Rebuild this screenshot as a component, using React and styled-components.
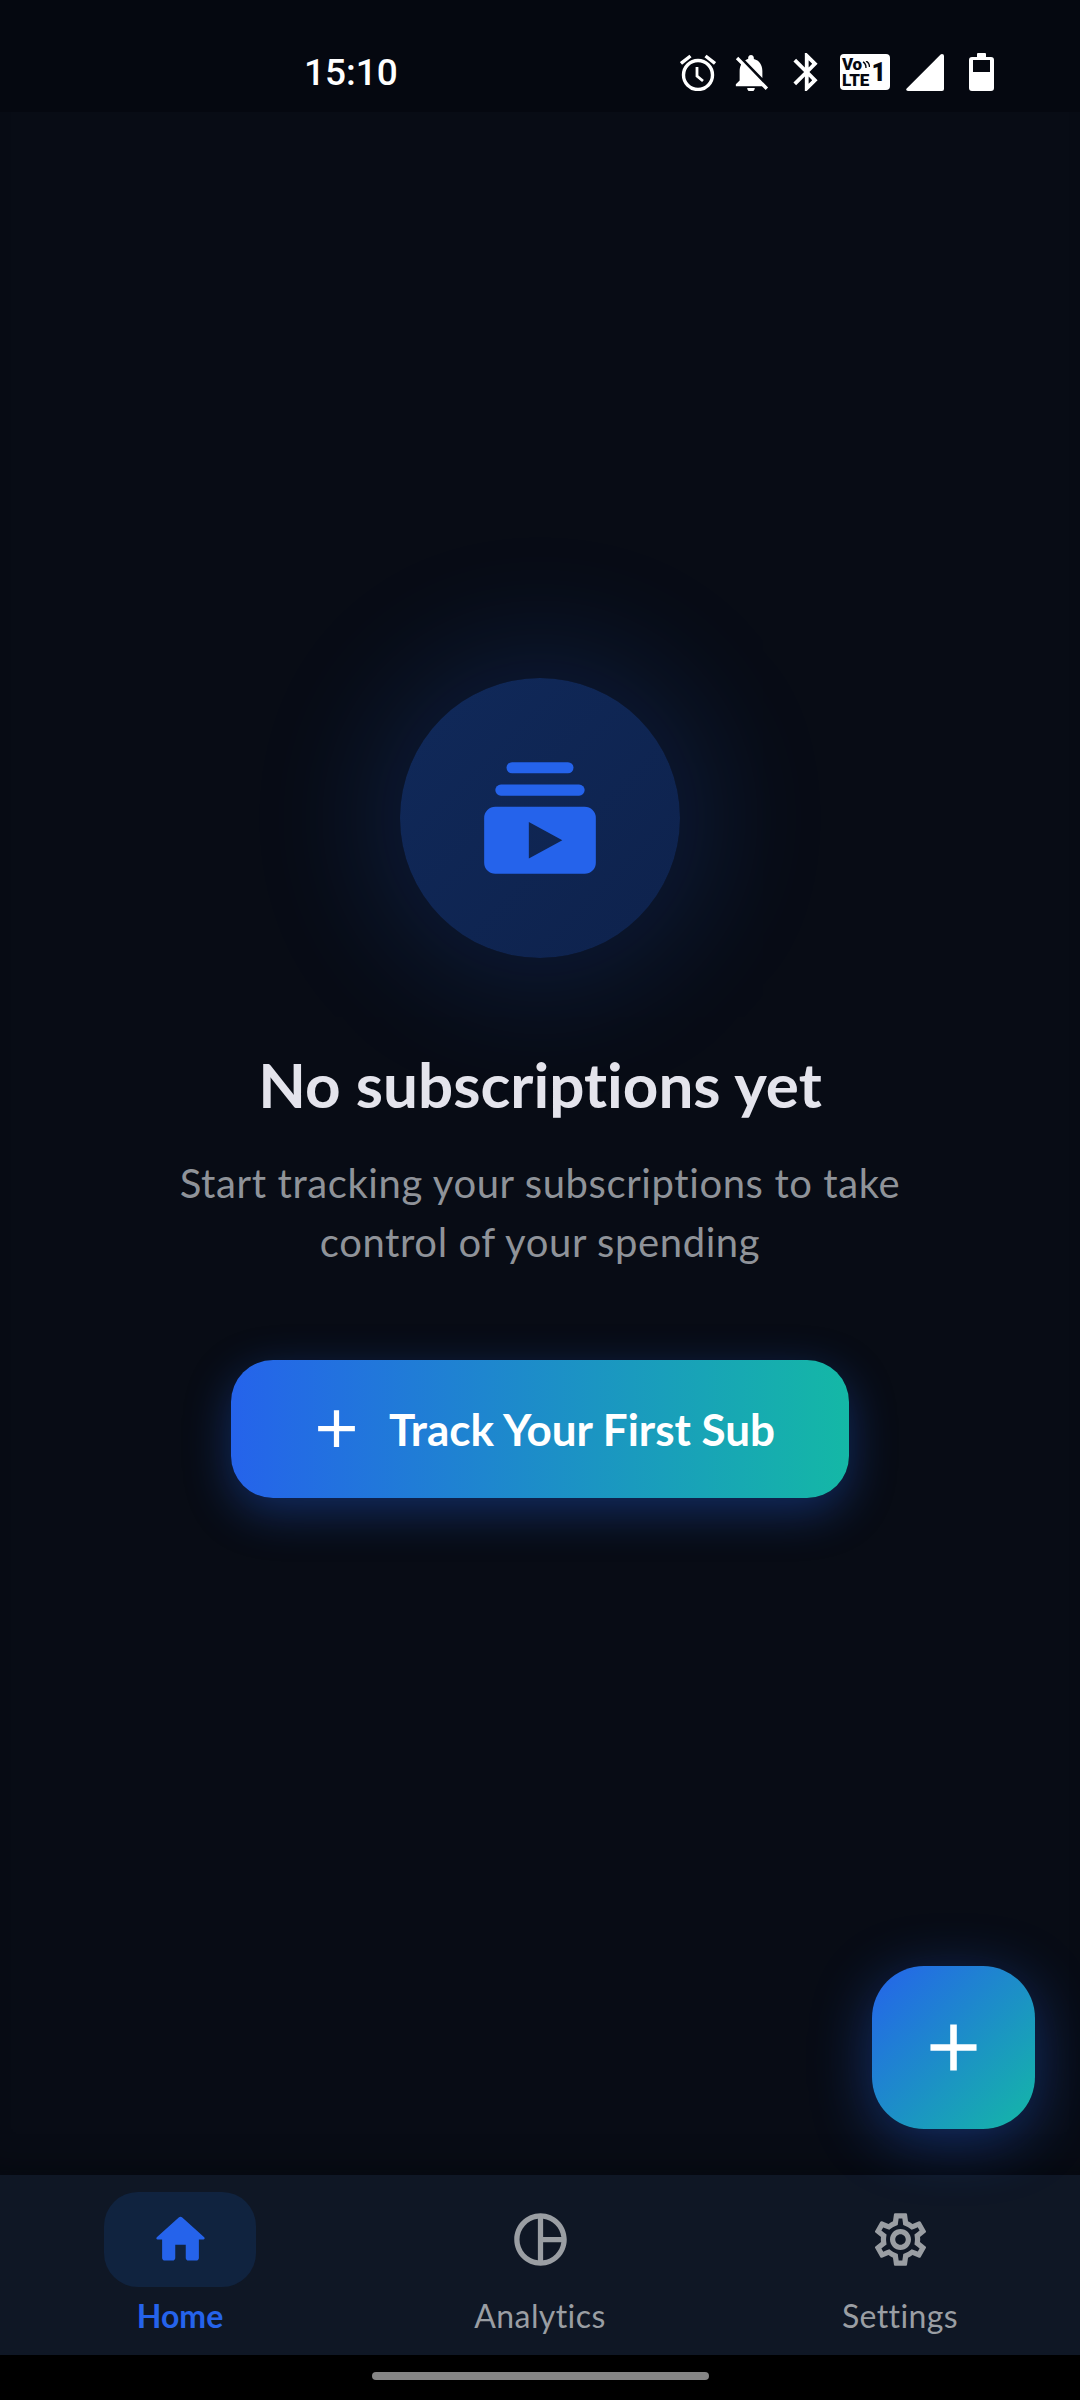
import React from "react";
import styled, { createGlobalStyle } from "styled-components";

const GlobalStyle = createGlobalStyle`
  * {
    box-sizing: border-box;
  }
  html,
  body {
    margin: 0;
    padding: 0;
    background: #080c15;
    font-family: "Lato", "Noto Sans", sans-serif;
    font-variant-ligatures: none;
  }
`;

const Screen = styled.div`
  position: relative;
  width: 1080px;
  height: 2400px;
  display: flex;
  flex-direction: column;
  overflow: hidden;
  background: #080c15;
`;

const StatusBar = styled.header`
  height: 112px;
  flex: none;
  display: flex;
  align-items: center;
  padding: 32px 86px 0 304px;
  background: #050810;
  color: #fff;
`;

const Clock = styled.span`
  font-family: "Roboto", sans-serif;
  font-size: 37px;
  font-weight: 500;
`;

const StatusIcons = styled.div`
  margin-left: auto;
  display: flex;
  align-items: center;
`;

const StatusSlot = styled.span`
  display: flex;
  margin-left: ${(props) => props.$gap || 0}px;
`;

const VolteBadge = styled.span`
  width: 50px;
  height: 36px;
  border-radius: 4px;
  background: #fff;
  color: #050810;
  display: flex;
  align-items: center;
  padding: 0 2px;
  font-family: "Roboto", sans-serif;
  font-weight: 900;
`;

const VolteStack = styled.span`
  display: flex;
  flex-direction: column;
  font-size: 17px;
  line-height: 16px;
  letter-spacing: -0.3px;
`;

const VolteSim = styled.span`
  margin-left: auto;
  margin-right: 2px;
  font-size: 25px;
  line-height: 25px;
`;

const Main = styled.main`
  flex: 1;
  display: flex;
  flex-direction: column;
  align-items: center;
  justify-content: center;
  padding-bottom: 112px;
  box-shadow: inset 0 -30px 30px -20px rgba(0, 0, 0, 0.25);
`;

const HeroCircle = styled.div`
  width: 280px;
  height: 280px;
  flex: none;
  border-radius: 50%;
  display: flex;
  align-items: center;
  justify-content: center;
  background: linear-gradient(135deg, #10295a, #0e224c);
  box-shadow: 0 0 130px 24px rgba(37, 99, 235, 0.19);
`;

const Title = styled.h1`
  margin: 90px 0 0;
  font-size: 62px;
  line-height: 72px;
  font-weight: 700;
  color: #e4e4ec;
`;

const Subtitle = styled.p`
  margin: 34px 0 0;
  width: 780px;
  text-align: center;
  font-size: 40px;
  line-height: 59px;
  letter-spacing: 0.6px;
  font-weight: 400;
  color: #8f9399;
`;

const TrackButton = styled.button`
  margin-top: 88px;
  width: 618px;
  height: 138px;
  flex: none;
  border: 0;
  border-radius: 42px;
  display: flex;
  align-items: center;
  justify-content: center;
  gap: 21px;
  background: linear-gradient(90deg, #2563eb, #14b8a6);
  box-shadow: 0 14px 46px rgba(37, 99, 235, 0.36);
  color: #fff;
  font-family: inherit;
  font-variant-ligatures: none;
  font-size: 44px;
  font-weight: 700;
`;

const Fab = styled.button`
  position: absolute;
  right: 45px;
  bottom: 271px;
  width: 163px;
  height: 163px;
  border: 0;
  padding: 0;
  border-radius: 52px;
  display: flex;
  align-items: center;
  justify-content: center;
  background: linear-gradient(135deg, #2563eb, #14b8a6);
  box-shadow: 0 12px 60px rgba(37, 99, 235, 0.4);
  color: #fff;
`;

const BottomNav = styled.nav`
  position: relative;
  height: 180px;
  flex: none;
  display: grid;
  grid-template-columns: repeat(3, 1fr);
  background: rgba(16, 24, 38, 0.97);
`;

const NavItem = styled.a`
  display: flex;
  flex-direction: column;
  align-items: center;
  padding-top: 17px;
  color: ${(props) => (props.$active ? "#2563eb" : "#9a9ea3")};
  font-size: 32px;
  letter-spacing: ${(props) => (props.$active ? 0 : 0.4)}px;
  font-weight: ${(props) => (props.$active ? 700 : 400)};
`;

const NavPill = styled.span`
  width: 152px;
  height: 95px;
  border-radius: 34px;
  display: flex;
  align-items: center;
  justify-content: center;
  background: ${(props) => (props.$active ? "#10233f" : "transparent")};
`;

const NavLabel = styled.span`
  margin-top: 9px;
  line-height: 40px;
`;

const GestureBar = styled.div`
  height: 45px;
  flex: none;
  background: #000;
  display: flex;
  justify-content: center;
  padding-top: 17px;
`;

const GestureHandle = styled.span`
  width: 337px;
  height: 8px;
  border-radius: 4px;
  background: #858585;
`;

const Icon = ({ size = 63, path, color = "currentColor", fillRule }) => (
  <svg width={size} height={size} viewBox="0 0 24 24" fill={color}>
    <path d={path} fillRule={fillRule} />
  </svg>
);

const ADD =
  "M19 13h-6v6h-2v-6H5v-2h6V5h2v6h6v2z";
const HOME =
  "M10 19v-5h4v5c0 .55.45 1 1 1h3c.55 0 1-.45 1-1v-7h1.7c.46 0 .68-.57.33-.87L12.67 3.6c-.38-.34-.96-.34-1.34 0l-8.36 7.53c-.34.3-.13.87.33.87H5v7c0 .55.45 1 1 1h3c.55 0 1-.45 1-1z";
const PIE =
  "M12 2C6.48 2 2 6.48 2 12s4.48 10 10 10 10-4.48 10-10S17.52 2 12 2zm1 2.07c3.61.45 6.48 3.33 6.93 6.93H13V4.07zM4 12c0-4.06 3.07-7.44 7-7.93v15.87c-3.93-.5-7-3.88-7-7.94zm9 7.93V13h6.93c-.45 3.61-3.32 6.48-6.93 6.93z";
const GEAR =
  "M19.43 12.98c.04-.32.07-.64.07-.98 0-.34-.03-.66-.07-.98l2.11-1.65c.19-.15.24-.42.12-.64l-2-3.46c-.09-.16-.26-.25-.44-.25-.06 0-.12.01-.17.03l-2.49 1c-.52-.4-1.08-.73-1.69-.98l-.38-2.65C14.46 2.18 14.25 2 14 2h-4c-.25 0-.46.18-.49.42l-.38 2.65c-.61.25-1.17.59-1.69.98l-2.49-1c-.06-.02-.12-.03-.18-.03-.17 0-.34.09-.43.25l-2 3.46c-.13.22-.07.49.12.64l2.11 1.65c-.04.32-.07.65-.07.98 0 .33.03.66.07.98l-2.11 1.65c-.19.15-.24.42-.12.64l2 3.46c.09.16.26.25.44.25.06 0 .12-.01.17-.03l2.49-1c.52.4 1.08.73 1.69.98l.38 2.65c.03.24.24.42.49.42h4c.25 0 .46-.18.49-.42l.38-2.65c.61-.25 1.17-.59 1.69-.98l2.49 1c.06.02.12.03.18.03.17 0 .34-.09.43-.25l2-3.46c.12-.22.07-.49-.12-.64l-2.11-1.65zm-1.98-1.71c.04.31.05.52.05.73 0 .21-.02.43-.05.73l-.14 1.13.89.7 1.08.84-.7 1.21-1.27-.51-1.04-.42-.9.68c-.43.32-.84.56-1.25.73l-1.06.43-.16 1.13-.2 1.35h-1.4l-.19-1.35-.16-1.13-1.06-.43c-.43-.18-.83-.41-1.23-.71l-.91-.7-1.06.43-1.27.51-.7-1.21 1.08-.84.89-.7-.14-1.13c-.03-.31-.05-.54-.05-.74s.02-.43.05-.73l.14-1.13-.89-.7-1.08-.84.7-1.21 1.27.51 1.04.42.9-.68c.43-.32.84-.56 1.25-.73l1.06-.43.16-1.13.2-1.35h1.39l.19 1.35.16 1.13 1.06.43c.43.18.83.41 1.23.71l.91.7 1.06-.43 1.27-.51.7 1.21-1.07.85-.89.7.14 1.13zM12 8c-2.21 0-4 1.79-4 4s1.79 4 4 4 4-1.79 4-4-1.79-4-4-4zm0 6c-1.1 0-2-.9-2-2s.9-2 2-2 2 .9 2 2-.9 2-2 2z";

// stacked cards with a play button, the empty state mark
const SubscriptionsIcon = () => (
  <svg width="134" height="134" viewBox="0 0 24 24">
    <rect x="6" y="2" width="12" height="2" rx="1" fill="#2563eb" />
    <rect x="4" y="6" width="16" height="2" rx="1" fill="#2563eb" />
    <path
      fill="#2563eb"
      fillRule="evenodd"
      d="M4 10h16a2 2 0 0 1 2 2v8a2 2 0 0 1-2 2H4a2 2 0 0 1-2-2v-8a2 2 0 0 1 2-2zm6 2.73v6.53L16 16z"
    />
  </svg>
);

const AlarmIcon = () => (
  <svg width="36" height="38" viewBox="0 0 36 38" fill="none" stroke="#fff">
    <circle cx="18" cy="22" r="14.5" strokeWidth="3.4" />
    <path d="M17 14v9l6 5" strokeWidth="2.8" />
    <path d="M1 10.5 10.5 3M35 10.5 25.5 3" strokeWidth="3.4" />
  </svg>
);

const BellOffIcon = () => (
  <svg width="36" height="38" viewBox="2.5 1.5 19 20" fill="#fff">
    <path d="M20 18.69L7.84 6.14 5.27 3.49 4 4.76l2.8 2.8v.01c-.52.99-.8 2.16-.8 3.42v5l-2 2v1h13.73l2 2L21 19.72l-1-1.03zM12 22c1.11 0 2-.89 2-2h-4c0 1.11.89 2 2 2zm6-7.32V11c0-3.08-1.64-5.64-4.5-6.32V4c0-.83-.67-1.5-1.5-1.5s-1.5.67-1.5 1.5v.68c-.15.03-.29.08-.42.12-.1.03-.2.07-.3.11h-.01c-.2.08-.4.17-.59.27-.1.05-.2.1-.29.16L18 14.68z" />
  </svg>
);

const BluetoothIcon = () => (
  <svg width="25" height="38" viewBox="5 2 12.7 20" fill="#fff">
    <path d="M17.71 7.71L12 2h-1v7.59L6.41 5 5 6.41 10.59 12 5 17.59 6.41 19 11 14.41V22h1l5.71-5.71-4.3-4.29 4.3-4.29zM13 5.83l1.88 1.88L13 9.59V5.83zm1.88 10.46L13 18.17v-3.76l1.88 1.88z" />
  </svg>
);

const SignalIcon = () => (
  <svg width="38" height="37" viewBox="0 0 38 37">
    <path
      fill="#fff"
      d="M36 0a2 2 0 0 1 2 2v33a2 2 0 0 1-2 2H2c-1.6 0-2.4-1.4-1.3-2.6L34.4.7C34.9.2 35.4 0 36 0z"
    />
  </svg>
);

const BatteryIcon = () => (
  <svg width="25" height="38" viewBox="0 0 25 38">
    <path
      fill="#fff"
      fillRule="evenodd"
      d="M9 0h7a1 1 0 0 1 1 1v3h5a3 3 0 0 1 3 3v28a3 3 0 0 1-3 3H3a3 3 0 0 1-3-3V7a3 3 0 0 1 3-3h5V1a1 1 0 0 1 1-1zM4 7v12h17V7H4z"
    />
  </svg>
);

const WaveMarks = () => (
  <svg width="8" height="9" viewBox="0 0 8 9" fill="none" stroke="#050810" strokeWidth="1.4">
    <path d="M1 1c2 1 3 3 3 6M4 0c2 1 3.500 3 3.500 6" />
  </svg>
);

const NAV_ITEMS = [
  { label: "Home", path: HOME, active: true },
  { label: "Analytics", path: PIE },
  { label: "Settings", path: GEAR },
];

const App = () => {
  return (
    <Screen>
      <GlobalStyle />
      <StatusBar>
        <Clock>15:10</Clock>
        <StatusIcons>
          <StatusSlot>
            <AlarmIcon />
          </StatusSlot>
          <StatusSlot $gap={17}>
            <BellOffIcon />
          </StatusSlot>
          <StatusSlot $gap={24}>
            <BluetoothIcon />
          </StatusSlot>
          <StatusSlot $gap={22}>
            <VolteBadge>
              <VolteStack>
                <span>
                  Vo
                  <WaveMarks />
                </span>
                <span>LTE</span>
              </VolteStack>
              <VolteSim>1</VolteSim>
            </VolteBadge>
          </StatusSlot>
          <StatusSlot $gap={16}>
            <SignalIcon />
          </StatusSlot>
          <StatusSlot $gap={25}>
            <BatteryIcon />
          </StatusSlot>
        </StatusIcons>
      </StatusBar>

      <Main>
        <HeroCircle>
          <SubscriptionsIcon />
        </HeroCircle>
        <Title>No subscriptions yet</Title>
        <Subtitle>
          Start tracking your subscriptions to take control of your spending
        </Subtitle>
        <TrackButton>
          <Icon path={ADD} />
          Track Your First Sub
        </TrackButton>
      </Main>

      <BottomNav>
        {NAV_ITEMS.map((item) => (
          <NavItem key={item.label} $active={item.active}>
            <NavPill $active={item.active}>
              <Icon path={item.path} />
            </NavPill>
            <NavLabel>{item.label}</NavLabel>
          </NavItem>
        ))}
      </BottomNav>

      <GestureBar>
        <GestureHandle />
      </GestureBar>

      <Fab>
        <Icon size={79} path={ADD} />
      </Fab>
    </Screen>
  );
};

export default App;
